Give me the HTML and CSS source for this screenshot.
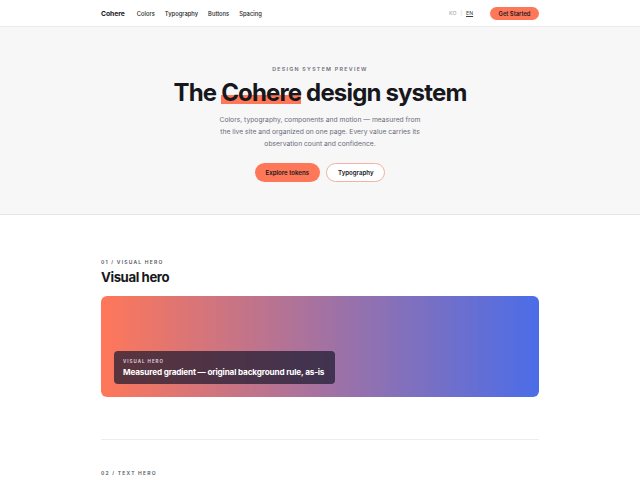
FILE: index.html
```html
<!DOCTYPE html>
<html>
<head>
<meta charset="utf-8">
<link rel="stylesheet" href="styles.css">
</head>
<body>
<header class="nav">
  <div class="wrap nav-inner">
    <div class="nav-left">
      <span class="brand">Cohere</span>
      <a class="nav-link">Colors</a>
      <a class="nav-link">Typography</a>
      <a class="nav-link">Buttons</a>
      <a class="nav-link">Spacing</a>
    </div>
    <div class="nav-right">
      <span class="lang">KO</span>
      <span class="sep">|</span>
      <span class="lang active">EN</span>
      <a class="btn-start">Get Started</a>
    </div>
  </div>
</header>
<section class="hero">
  <div class="eyebrow">DESIGN SYSTEM PREVIEW</div>
  <h1 class="title">The <span class="mark">Cohere</span> design system</h1>
  <p class="lead">Colors, typography, components and motion — measured from the live site and organized on one page. Every value carries its observation count and confidence.</p>
  <div class="actions">
    <a class="btn btn-primary">Explore tokens</a>
    <a class="btn btn-outline">Typography</a>
  </div>
</section>
<main class="wrap">
  <section class="block">
    <div class="kicker">01 / VISUAL HERO</div>
    <h2 class="h2">Visual hero</h2>
    <div class="gradient">
      <div class="caption">
        <div class="cap-small">VISUAL HERO</div>
        <div class="cap-big">Measured gradient — original background rule, as-is</div>
      </div>
    </div>
  </section>
  <hr class="divider">
  <section class="block2">
    <div class="kicker">02 / TEXT HERO</div>
  </section>
</main>
</body>
</html>
```
FILE: styles.css
```css
* { box-sizing: border-box; }
html, body { margin: 0; padding: 0; }
body {
  font-family: Inter, "Liberation Sans", sans-serif;
  color: #17171c;
  background: #fff;
}
.wrap { width: 438px; margin: 0 auto; }
.nav {
  height: 27px;
  border-bottom: 1px solid #ececef;
  background: #fff;
}
.nav-inner {
  height: 100%;
  display: flex;
  align-items: center;
  justify-content: space-between;
}
.nav-left { display: flex; align-items: center; gap: 10px; }
.brand { font-weight: 700; font-size: 6.8px; letter-spacing: -0.01em; margin-right: 2px; }
.nav-link { font-size: 5.8px; font-weight: 500; color: #1f1f26; }
.nav-right { display: flex; align-items: center; gap: 4px; }
.lang { font-size: 5.2px; color: #9a9aa4; }
.lang.active { color: #3a3a44; text-decoration: underline; text-underline-offset: 1px; }
.sep { font-size: 5px; color: #c9c9cf; }
.btn-start {
  margin-left: 13px;
  background: #ff7759;
  color: #1b1b20;
  font-size: 5.8px;
  font-weight: 600;
  height: 13px;
  padding: 0 8.5px;
  border-radius: 7px;
  display: flex;
  align-items: center;
}
.hero {
  background: #f7f7f8;
  border-bottom: 1px solid #e6e6ea;
  height: 188px;
  display: flex;
  flex-direction: column;
  align-items: center;
  padding-top: 39px;
}
.eyebrow {
  font-size: 5.3px;
  letter-spacing: 0.24em;
  color: #6e6e78;
  font-weight: 600;
}
.title {
  margin: 6px 0 0;
  font-size: 24px;
  line-height: 30px;
  font-weight: 700;
  letter-spacing: -0.035em;
  color: #17171c;
}
.mark {
  background: linear-gradient(to bottom, transparent 60%, #ff7759 60%, #ff7759 90%, transparent 90%);
}
.lead {
  margin: 6px 0 0;
  width: 202px;
  text-align: center;
  font-size: 6.75px;
  line-height: 12px;
  color: #6c6c78;
}
.actions { display: flex; gap: 6px; margin-top: 13px; }
.btn {
  height: 19px;
  border-radius: 10px;
  font-size: 6.1px;
  font-weight: 600;
  display: flex;
  align-items: center;
  padding: 0 11px;
  color: #17171c;
}
.btn-primary { background: #ff7759; }
.btn-outline { background: #fff; border: 1px solid #f3b2a3; }
.block { padding-top: 44px; }
.kicker {
  font-size: 5px;
  letter-spacing: 0.24em;
  color: #55555f;
  font-weight: 600;
}
.h2 {
  margin: 4px 0 0;
  font-size: 13.2px;
  line-height: 17px;
  font-weight: 700;
  letter-spacing: -0.03em;
}
.gradient {
  margin-top: 10px;
  height: 101px;
  border-radius: 6px;
  background: linear-gradient(90deg, #ff7759 0%, #4b6de8 100%);
  display: flex;
  align-items: flex-end;
  padding: 0 0 13px 13px;
}
.caption {
  width: 221px;
  background: rgba(28, 26, 48, 0.72);
  border-radius: 4px;
  padding: 8px 9px 7px;
  color: #fff;
}
.cap-small {
  font-size: 4.5px;
  letter-spacing: 0.22em;
  font-weight: 600;
  color: #e3d9e0;
}
.cap-big {
  margin-top: 3px;
  font-size: 8.2px;
  font-weight: 700;
  letter-spacing: -0.02em;
  white-space: nowrap;
}
.divider {
  margin: 42px 0 0;
  border: 0;
  border-top: 1px solid #ededf0;
}
.block2 { padding-top: 30px; }
```
